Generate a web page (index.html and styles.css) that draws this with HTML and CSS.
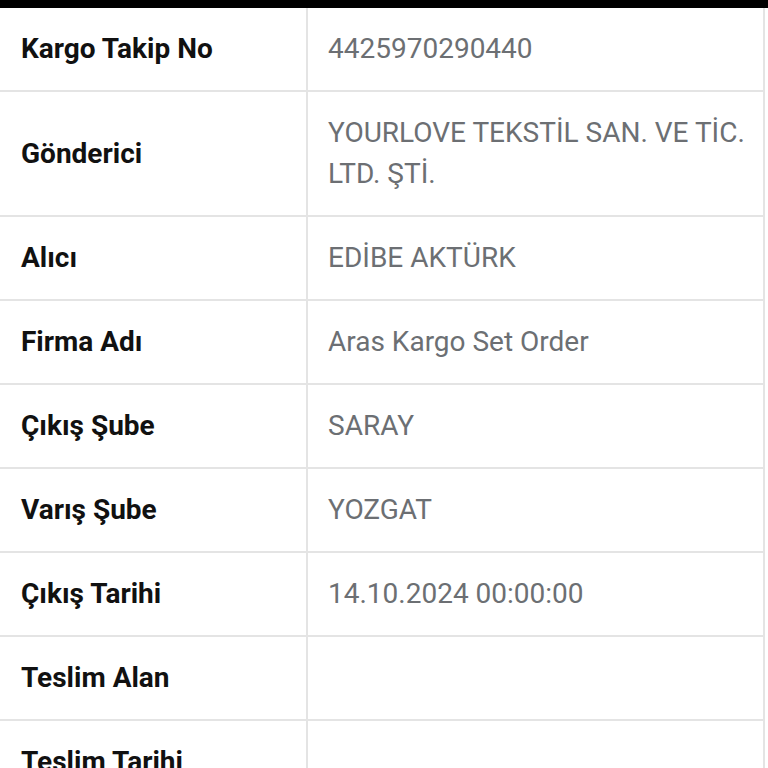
FILE: index.html
```html
<!DOCTYPE html>
<html lang="tr">
<head>
<meta charset="utf-8">
<link rel="stylesheet" href="styles.css">
</head>
<body>
<div class="topbar"></div>
<table class="info">
  <tr><th>Kargo Takip No</th><td>4425970290440</td></tr>
  <tr><th>Gönderici</th><td>YOURLOVE TEKSTİL SAN. VE TİC. LTD. ŞTİ.</td></tr>
  <tr><th>Alıcı</th><td>EDİBE AKTÜRK</td></tr>
  <tr><th>Firma Adı</th><td>Aras Kargo Set Order</td></tr>
  <tr><th>Çıkış Şube</th><td>SARAY</td></tr>
  <tr><th>Varış Şube</th><td>YOZGAT</td></tr>
  <tr><th>Çıkış Tarihi</th><td>14.10.2024 00:00:00</td></tr>
  <tr><th>Teslim Alan</th><td></td></tr>
  <tr><th>Teslim Tarihi</th><td></td></tr>
</table>
</body>
</html>
```
FILE: styles.css
```css
html, body {
  margin: 0;
  padding: 0;
  background: #fff;
  overflow: hidden;
}
body {
  font-family: Roboto, "Noto Sans", sans-serif;
}
.topbar {
  height: 8px;
  background: #000;
}
.info {
  border-collapse: collapse;
  width: 765px;
  table-layout: fixed;
}
.info th,
.info td {
  font-size: 28px;
  line-height: 41px;
  padding: 20px 10px 21px 20px;
  text-align: left;
  vertical-align: middle;
  border-bottom: 2px solid #e4e4e4;
}
.info th {
  width: 276px;
  padding-left: 21px;
  padding-right: 9px;
  font-weight: 700;
  color: #111;
  border-right: 2px solid #e4e4e4;
}
.info td {
  font-weight: 400;
  color: #6c6f73;
  border-right: 2px solid #e4e4e4;
}
```
